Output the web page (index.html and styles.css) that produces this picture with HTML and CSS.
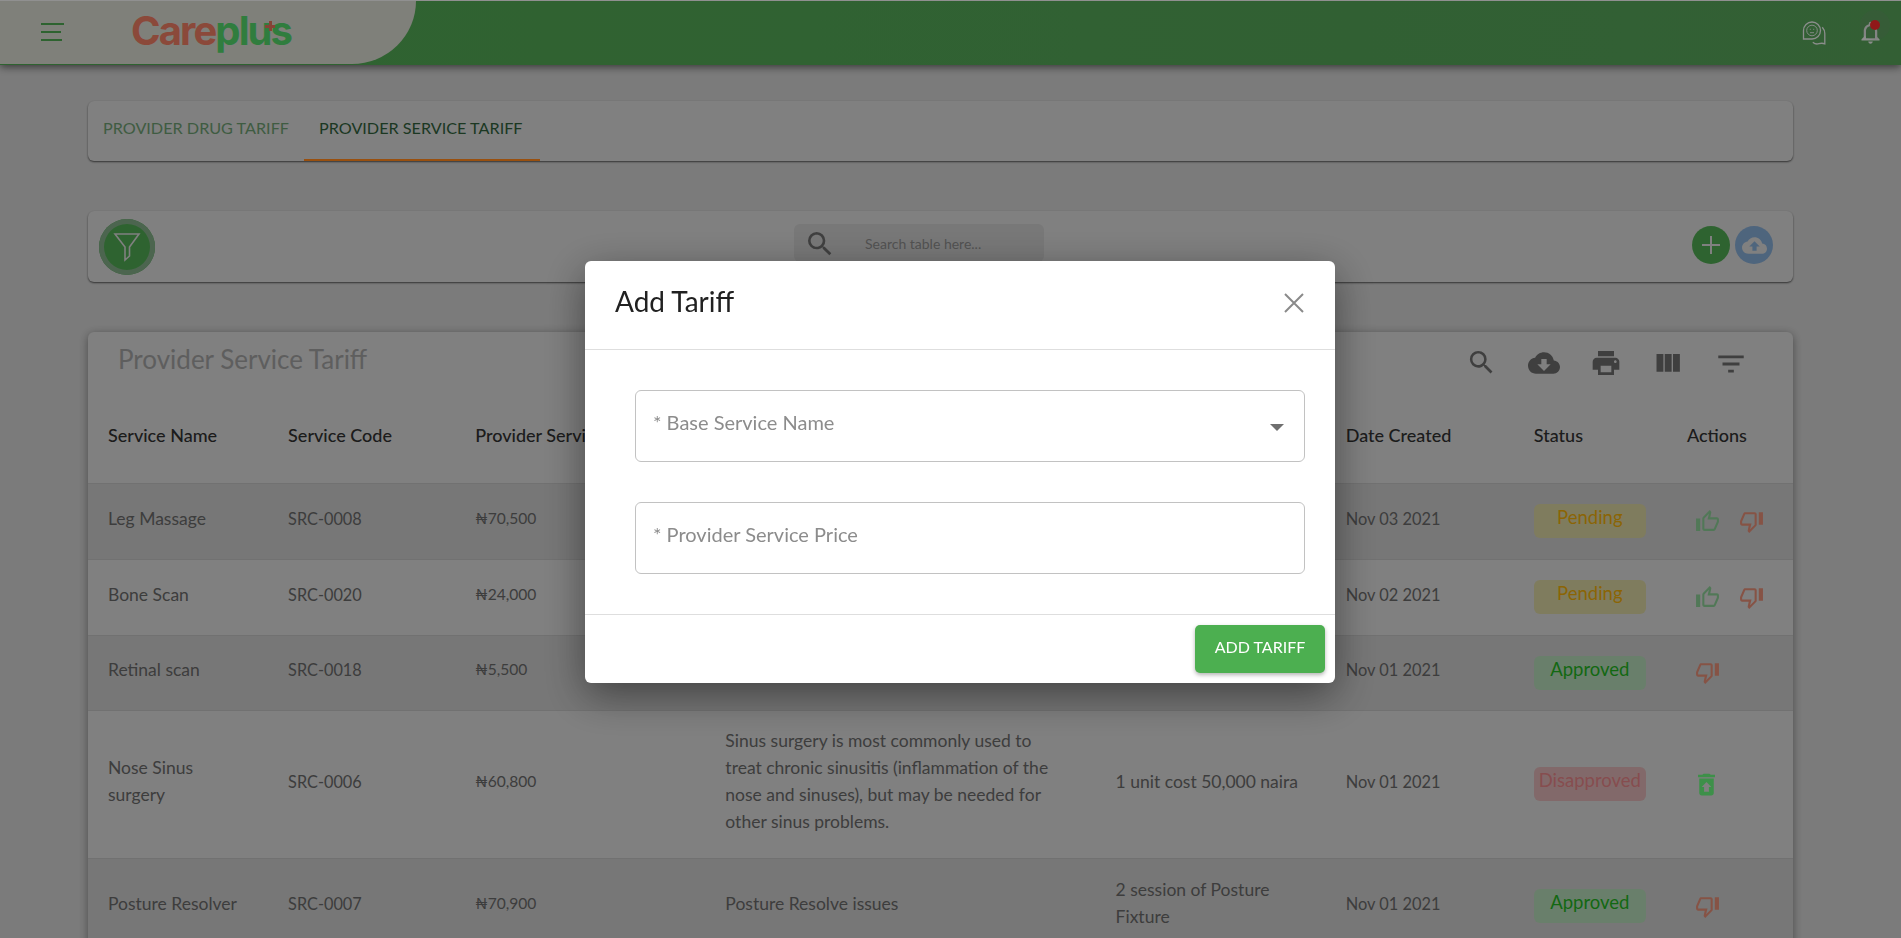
FILE: index.html
```html
<!DOCTYPE html>
<html lang="en">
<head>
<meta charset="utf-8">
<title>Provider Service Tariff</title>
<link rel="stylesheet" href="styles.css">
</head>
<body>
<header class="topbar">
  <div class="brand">
    <div class="burger"><span></span><span class="mid"></span><span class="low"></span></div>
    <div class="logo"><span class="logo-care">Care</span><span class="logo-plus">plus</span></div>
  </div>
  <div class="top-icons">
    <svg class="chat" viewBox="0 0 24 24"><path d="M10 1a8.500 8.500 0 1 1 0 17H1.500V9.500A8.500 8.500 0 0 1 10 1z" fill="none" stroke="currentColor" stroke-width="1.300"/><circle cx="10" cy="9.500" r="5.300" fill="none" stroke="currentColor" stroke-width=".9"/><path d="M7.800 8.300h1M11.200 8.300h1M8 11.700h4" stroke="currentColor" stroke-width=".9" fill="none"/><path d="M20.300 6.300c1.600 1.800 2.500 3.800 2.500 6.200v10.300c-2-.8-4-.7-6-.1-2 .7-4 .3-6-1.500" fill="none" stroke="currentColor" stroke-width="1.300"/></svg>
    <div class="bell-wrap">
      <svg class="bell" viewBox="0 0 24 24"><path d="M12 22c1.100 0 2-.9 2-2h-4c0 1.100.9 2 2 2zm6-6v-5c0-3.070-1.630-5.640-4.500-6.320V4c0-.83-.67-1.500-1.500-1.500s-1.500.67-1.500 1.500v.68C7.640 5.360 6 7.920 6 11v5l-2 2v1h16v-1l-2-2zm-2 1H8v-6c0-2.480 1.510-4.500 4-4.500s4 2.020 4 4.500v6z"/></svg>
      <span class="halo"></span>
      <span class="dot"></span>
    </div>
  </div>
</header>

<main class="page">
  <nav class="card tabs">
    <a class="tab">PROVIDER DRUG TARIFF</a>
    <a class="tab active">PROVIDER SERVICE TARIFF</a>
  </nav>

  <section class="card toolbar">
    <button class="filter-btn"><svg viewBox="0 0 28 30"><path d="M2 2h24L16.500 15v9l-4.500 4V15z" fill="none" stroke="currentColor" stroke-width="1.600"/></svg></button>
    <div class="search">
      <svg class="search-icon" viewBox="0 0 24 24"><path d="M15.500 14h-.79l-.28-.27A6.471 6.471 0 0 0 16 9.500 6.500 6.500 0 1 0 9.500 16c1.610 0 3.090-.59 4.230-1.570l.27.280v.79l5 4.990L20.490 19l-4.990-5zm-6 0C7.010 14 5 11.990 5 9.500S7.010 5 9.500 5 14 7.010 14 9.500 11.990 14 9.500 14z"/></svg>
      <span class="search-text">Search table here...</span>
    </div>
    <div class="round-actions">
      <button class="round add"><svg viewBox="0 0 24 24"><path d="M12 3v18M3 12h18" stroke="currentColor" stroke-width="2" fill="none"/></svg></button>
      <button class="round upload"><svg viewBox="0 0 24 24"><path d="M19.350 10.040C18.670 6.590 15.640 4 12 4 9.110 4 6.600 5.640 5.350 8.040 2.340 8.360 0 10.910 0 14c0 3.310 2.690 6 6 6h13c2.760 0 5-2.240 5-5 0-2.640-2.050-4.780-4.650-4.960zM14 13v4h-4v-4H7l5-5 5 5h-3z"/></svg></button>
    </div>
  </section>

  <section class="card table-card">
    <div class="table-head">
      <h2 class="table-title">Provider Service Tariff</h2>
      <div class="table-tools">
        <svg class="tool t-search" viewBox="0 0 24 24"><path d="M15.500 14h-.79l-.28-.27A6.471 6.471 0 0 0 16 9.500 6.500 6.500 0 1 0 9.500 16c1.610 0 3.090-.59 4.230-1.570l.27.280v.79l5 4.990L20.490 19l-4.990-5zm-6 0C7.010 14 5 11.990 5 9.500S7.010 5 9.500 5 14 7.010 14 9.500 11.990 14 9.500 14z"/></svg>
        <svg class="tool t-cloud" viewBox="0 0 24 24"><path d="M19.350 10.040C18.670 6.590 15.640 4 12 4 9.110 4 6.600 5.640 5.350 8.040 2.340 8.360 0 10.910 0 14c0 3.310 2.690 6 6 6h13c2.760 0 5-2.240 5-5 0-2.640-2.050-4.780-4.650-4.960zM17 13l-5 5-5-5h3V9h4v4h3z"/></svg>
        <svg class="tool t-print" viewBox="0 0 24 24"><path d="M19 8H5c-1.660 0-3 1.340-3 3v6h4v4h12v-4h4v-6c0-1.660-1.340-3-3-3zm-3 11H8v-5h8v5zm3-7c-.55 0-1-.45-1-1s.45-1 1-1 1 .45 1 1-.45 1-1 1zm-1-9H6v4h12V3z"/></svg>
        <svg class="tool t-cols" viewBox="0 0 24 24"><path d="M10 18h5V5h-5v13zm-6 0h5V5H4v13zM16 5v13h5V5h-5z"/></svg>
        <svg class="tool t-filter" viewBox="0 0 24 24"><path d="M10 18h4v-2h-4v2zM3 6v2h18V6H3zm3 7h12v-2H6v2z"/></svg>
      </div>
    </div>
    <table class="grid">
      <colgroup><col class="c1"><col class="c2"><col class="c3"><col class="c4"><col class="c5"><col class="c6"><col class="c7"><col class="c8"></colgroup>
      <thead>
        <tr><th>Service Name</th><th>Service Code</th><th class="nowrap">Provider Service Price</th><th></th><th></th><th>Date Created</th><th>Status</th><th>Actions</th></tr>
      </thead>
      <tbody>
        <tr class="r1">
          <td>Leg Massage</td><td class="code">SRC-0008</td><td class="price">₦70,500</td><td></td><td></td><td class="date">Nov 03 2021</td>
          <td class="cell-status"><span class="badge pending">Pending</span></td>
          <td class="cell-act"><div class="acts"><svg class="ic up" viewBox="0 0 24 24"><path d="M9 21h9c.83 0 1.540-.5 1.840-1.220l3.020-7.050c.09-.23.14-.47.14-.73v-2c0-1.100-.9-2-2-2h-6.310l.95-4.570.03-.32c0-.41-.17-.79-.44-1.060L14.170 1 7.580 7.590C7.220 7.950 7 8.450 7 9v10c0 1.100.9 2 2 2zM9 9l4.340-4.340L12 10h9v2l-3 7H9V9zM1 9h4v12H1z"/></svg><svg class="ic down" viewBox="0 0 24 24"><path d="M15 3H6c-.83 0-1.540.5-1.840 1.220l-3.020 7.050c-.09.23-.14.47-.14.73v2c0 1.100.9 2 2 2h6.310l-.95 4.570-.03.32c0 .41.17.79.44 1.060L9.830 23l6.590-6.590c.36-.36.58-.86.58-1.410V5c0-1.100-.9-2-2-2zm0 12l-4.340 4.340L12 14H3v-2l3-7h9v10zm4-12h4v12h-4z"/></svg></div></td>
        </tr>
        <tr class="r2">
          <td>Bone Scan</td><td class="code">SRC-0020</td><td class="price">₦24,000</td><td></td><td></td><td class="date">Nov 02 2021</td>
          <td class="cell-status"><span class="badge pending">Pending</span></td>
          <td class="cell-act"><div class="acts"><svg class="ic up" viewBox="0 0 24 24"><path d="M9 21h9c.83 0 1.540-.5 1.840-1.220l3.020-7.050c.09-.23.14-.47.14-.73v-2c0-1.100-.9-2-2-2h-6.310l.95-4.570.03-.32c0-.41-.17-.79-.44-1.060L14.170 1 7.580 7.590C7.220 7.950 7 8.450 7 9v10c0 1.100.9 2 2 2zM9 9l4.340-4.340L12 10h9v2l-3 7H9V9zM1 9h4v12H1z"/></svg><svg class="ic down" viewBox="0 0 24 24"><path d="M15 3H6c-.83 0-1.540.5-1.840 1.220l-3.020 7.050c-.09.23-.14.47-.14.73v2c0 1.100.9 2 2 2h6.310l-.95 4.570-.03.32c0 .41.17.79.44 1.060L9.830 23l6.590-6.590c.36-.36.58-.86.58-1.410V5c0-1.100-.9-2-2-2zm0 12l-4.340 4.340L12 14H3v-2l3-7h9v10zm4-12h4v12h-4z"/></svg></div></td>
        </tr>
        <tr class="r3">
          <td>Retinal scan</td><td class="code">SRC-0018</td><td class="price">₦5,500</td><td></td><td></td><td class="date">Nov 01 2021</td>
          <td class="cell-status"><span class="badge approved">Approved</span></td>
          <td class="cell-act"><div class="acts"><svg class="ic down" viewBox="0 0 24 24"><path d="M15 3H6c-.83 0-1.540.5-1.840 1.220l-3.020 7.050c-.09.23-.14.47-.14.73v2c0 1.100.9 2 2 2h6.310l-.95 4.570-.03.32c0 .41.17.79.44 1.060L9.830 23l6.590-6.590c.36-.36.58-.86.58-1.410V5c0-1.100-.9-2-2-2zm0 12l-4.340 4.340L12 14H3v-2l3-7h9v10zm4-12h4v12h-4z"/></svg></div></td>
        </tr>
        <tr class="r4">
          <td>Nose Sinus<br>surgery</td><td class="code">SRC-0006</td><td class="price">₦60,800</td>
          <td>Sinus surgery is most commonly used to<br>treat chronic sinusitis (inflammation of the<br>nose and sinuses), but may be needed for<br>other sinus problems.</td>
          <td>1 unit cost 50,000 naira</td><td class="date">Nov 01 2021</td>
          <td class="cell-status"><span class="badge disapproved">Disapproved</span></td>
          <td class="cell-act"><div class="acts"><svg class="ic trash" viewBox="0 0 24 24"><path d="M19 4h-3.500l-1-1h-5l-1 1H5v2h14zM6 7v12c0 1.100.9 2 2 2h8c1.100 0 2-.9 2-2V7H6zm8 7v4h-4v-4H8l4-4 4 4h-2z"/></svg></div></td>
        </tr>
        <tr class="r5">
          <td>Posture Resolver</td><td class="code">SRC-0007</td><td class="price">₦70,900</td>
          <td>Posture Resolve issues</td>
          <td>2 session of Posture<br>Fixture</td><td class="date">Nov 01 2021</td>
          <td class="cell-status"><span class="badge approved">Approved</span></td>
          <td class="cell-act"><div class="acts"><svg class="ic down" viewBox="0 0 24 24"><path d="M15 3H6c-.83 0-1.540.5-1.840 1.220l-3.020 7.050c-.09.23-.14.47-.14.73v2c0 1.100.9 2 2 2h6.310l-.95 4.570-.03.32c0 .41.17.79.44 1.060L9.830 23l6.590-6.590c.36-.36.58-.86.58-1.410V5c0-1.100-.9-2-2-2zm0 12l-4.340 4.340L12 14H3v-2l3-7h9v10zm4-12h4v12h-4z"/></svg></div></td>
        </tr>
      </tbody>
    </table>
  </section>
</main>

<div class="overlay">
  <div class="modal">
    <div class="modal-head">
      <h1 class="modal-title">Add Tariff</h1>
      <svg class="close" viewBox="0 0 20 20"><path d="M1 1l18 18M19 1L1 19" stroke="currentColor" stroke-width="2" fill="none"/></svg>
    </div>
    <div class="modal-body">
      <div class="field"><span class="ph">* Base Service Name</span><span class="caret"></span></div>
      <div class="field"><span class="ph">* Provider Service Price</span></div>
    </div>
    <div class="modal-foot"><button class="submit">ADD TARIFF</button></div>
  </div>
</div>
</body>
</html>
```
FILE: styles.css
```css
* { box-sizing: border-box; }
html, body { margin: 0; height: 100%; overflow: hidden; }
body {
  background: #cecece;
  font-family: "Lato", "Noto Sans", "Liberation Sans", sans-serif;
  font-size: 16px;
  color: #676767;
}
svg { display: block; fill: currentColor; }
button { border: 0; padding: 0; font: inherit; }

.topbar {
  height: 65px;
  border-top: 1px solid #f0f0f0;
  background: linear-gradient(90deg, #4ea651, #559f58);
  display: flex;
  justify-content: space-between;
  box-shadow: 0 2px 8px rgba(0, 0, 0, .55);
  position: relative;
}
.brand {
  width: 416px;
  height: 63px;
  background: #d4d5cb;
  border-bottom-right-radius: 64px 63px;
  display: flex;
  align-items: flex-start;
  padding-left: 41px;
}
.burger { width: 23px; padding-top: 22px; display: flex; flex-direction: column; gap: 6px; }
.burger span { display: block; height: 2px; background: #4ea651; width: 23px; }
.burger .mid { width: 20px; }
.burger .low { width: 21px; }
.logo {
  position: relative;
  margin-left: 67px;
  margin-top: 5px;
  font-family: "Inter", "Noto Sans", sans-serif;
  font-weight: 700;
  font-size: 40px;
  line-height: 50px;
  letter-spacing: -1.900px;
}
.logo::after {
  content: "";
  position: absolute;
  left: 134px;
  top: 15px;
  width: 10px;
  height: 10px;
  background:
    linear-gradient(#e0705a, #e0705a) center / 10px 3px no-repeat,
    linear-gradient(#e0705a, #e0705a) center / 3px 10px no-repeat;
}
.logo-care { color: #e87a62; }
.logo-plus { color: #50d068; }

.top-icons { display: flex; align-items: flex-start; color: #e9ece9; padding-right: 17px; }
.chat { width: 24px; height: 24px; margin-top: 20px; }
.bell-wrap { position: relative; width: 27px; height: 27px; margin: 18px 0 0 31px; }
.bell { width: 27px; height: 27px; }
.halo { position: absolute; left: 3px; top: -9px; width: 30px; height: 30px; border-radius: 50%; background: rgba(130, 130, 130, .14); }
.dot { position: absolute; left: 13px; top: 1px; width: 10px; height: 10px; border-radius: 50%; background: #f02b2b; }

.page { padding: 36px 108px 0 88px; }
.card {
  background: #d5d5d5;
  border-radius: 6px;
  box-shadow: 0 1px 2px rgba(0, 0, 0, .6);
}
.tabs { height: 60px; display: flex; }
.tab {
  height: 60px;
  padding: 17px 15px 0;
  color: #6a9a6e;
  font-size: 16.200px;
  white-space: nowrap;
}
.tab:first-child { width: 216px; }
.tab.active {
  width: 236px;
  color: #2f5e3a;
  border-bottom: 2px solid #ff8519;
}

.toolbar {
  margin-top: 50px;
  height: 71px;
  display: flex;
  align-items: flex-start;
  padding: 8px 20px 0 11px;
}
.filter-btn {
  width: 56px;
  height: 56px;
  border-radius: 50%;
  background: #4ea651;
  box-shadow: inset 0 0 0 5px #7fa984;
  color: #d5d5d5;
  display: flex;
  align-items: center;
  justify-content: center;
  flex: none;
}
.filter-btn svg { width: 28px; height: 30px; }
.search {
  margin: 5px 0 0 639px;
  width: 250px;
  height: 38px;
  background: #c8c8c8;
  border-radius: 6px;
  display: flex;
  align-items: flex-start;
  padding: 4px 0 0 10px;
  flex: none;
}
.search-icon { width: 32px; height: 32px; color: #6b6b6b; }
.search-text { margin: 7px 0 0 29px; font-size: 14px; color: #8a8a8a; }
.round-actions { margin-left: auto; display: flex; gap: 5px; margin-top: 7px; }
.round { width: 38px; height: 38px; border-radius: 50%; display: flex; align-items: center; justify-content: center; color: #d5d5d5; }
.round.add { background: #4ea651; }
.round.upload { background: #82a8d0; }
.round.add svg { width: 24px; height: 24px; }
.round.upload svg { width: 25px; height: 25px; }

.table-card {
  margin-top: 50px;
  height: 900px;
  overflow: hidden;
  box-shadow: 0 2px 10px rgba(0, 0, 0, .4);
}
.table-head { height: 68px; display: flex; }
.table-title {
  margin: 9px 0 0 30px;
  font-size: 26px;
  line-height: 36px;
  font-weight: 400;
  color: #9d9d9d;
}
.table-tools { margin-left: auto; color: #6a6a6a; display: flex; padding: 15px 0 0; }
.tool { flex: none; }
.t-search { width: 31px; height: 31px; }
.t-cloud { width: 32px; height: 32px; margin-left: 31px; }
.t-print { width: 32px; height: 32px; margin-left: 30px; }
.t-cols { width: 33px; height: 33px; margin-left: 29px; }
.t-filter { width: 34px; height: 34px; margin: 0 45px 0 30px; }

.grid { width: 100%; border-collapse: collapse; table-layout: fixed; }
.c1 { width: 200px; } .c2 { width: 187px; } .c3 { width: 250px; } .c4 { width: 390px; }
.c5 { width: 230px; } .c6 { width: 188px; } .c7 { width: 153px; } .c8 { width: 106px; }
.grid th {
  height: 83px;
  padding: 0 0 12px;
  text-align: left;
  font-weight: 500;
  font-size: 18px;
  color: #2f2f2f;
}
.grid th:first-child, .grid td:first-child { padding-left: 20px; }
.nowrap { white-space: nowrap; }
.grid td {
  padding: 0 0 6px;
  font-size: 17.500px;
  line-height: 27px;
  color: #676767;
  white-space: nowrap;
  border-top: 1px solid #bdbdbd;
}
.grid td.code { font-size: 16.300px; }
.grid td.price { font-size: 15.600px; }
.grid td.date { font-size: 16.400px; }
.r1 td { height: 76px; background: #c6c6c6; }
.r2 td { height: 76px; }
.r3 td { height: 75px; background: #c6c6c6; }
.r4 td { height: 148px; }
.r5 td { height: 96px; background: #c6c6c6; }
.grid td.cell-status, .grid td.cell-act { padding: 0; }
.badge {
  display: block;
  width: 112px;
  height: 34px;
  border-radius: 6px;
  text-align: center;
  font-size: 18.500px;
  line-height: 27px;
}
.pending { background: #d4cf9d; color: #e8a808; }
.approved { background: #b0d4b2; color: #1fae1f; }
.disapproved { background: #d9b0b1; color: #e08084; }
.acts { display: flex; gap: 19px; padding-left: 8px; }
.ic { width: 25px; height: 25px; }
.up { color: #88c892; }
.down { color: #e08a74; }
.trash { color: #66f07a; width: 29px; height: 29px; margin-left: -3px; }

.overlay {
  position: fixed;
  inset: 0;
  background: rgba(0, 0, 0, .4);
  display: flex;
  justify-content: center;
  align-items: flex-start;
  padding: 261px 0 0 19px;
}
.modal {
  width: 750px;
  height: 422px;
  background: #fff;
  border-radius: 6px;
  box-shadow: 0 12px 40px rgba(0, 0, 0, .45);
  display: flex;
  flex-direction: column;
}
.modal-head {
  height: 89px;
  border-bottom: 1px solid #dedede;
  display: flex;
  justify-content: space-between;
  padding: 22px 31px 0 30px;
  flex: none;
}
.modal-title { margin: 0; font-size: 28px; line-height: 36px; font-weight: 400; color: #212121; }
.close { width: 20px; height: 20px; margin-top: 10px; color: #8a8a8a; }
.modal-body {
  flex: 1;
  padding: 40px 30px 0 50px;
  display: flex;
  flex-direction: column;
  gap: 40px;
}
.field {
  height: 72px;
  border: 1px solid #c2c2c2;
  border-radius: 6px;
  padding: 18px 0 0 17px;
  display: flex;
  justify-content: space-between;
  align-items: flex-start;
}
.ph { font-size: 20px; line-height: 27px; color: #8c8c8c; }
.caret {
  width: 0;
  height: 0;
  margin: 15px 20px 0 0;
  border-left: 7px solid transparent;
  border-right: 7px solid transparent;
  border-top: 7px solid #6f6f6f;
}
.modal-foot {
  height: 69px;
  border-top: 1px solid #dedede;
  padding: 10px 10px 0 0;
  display: flex;
  justify-content: flex-end;
  flex: none;
}
.submit {
  width: 130px;
  height: 48px;
  background: #4caf50;
  color: #fff;
  border-radius: 5px;
  font-size: 16px;
  padding-bottom: 5px;
  box-shadow: 0 2px 4px rgba(0, 0, 0, .3);
}
```
